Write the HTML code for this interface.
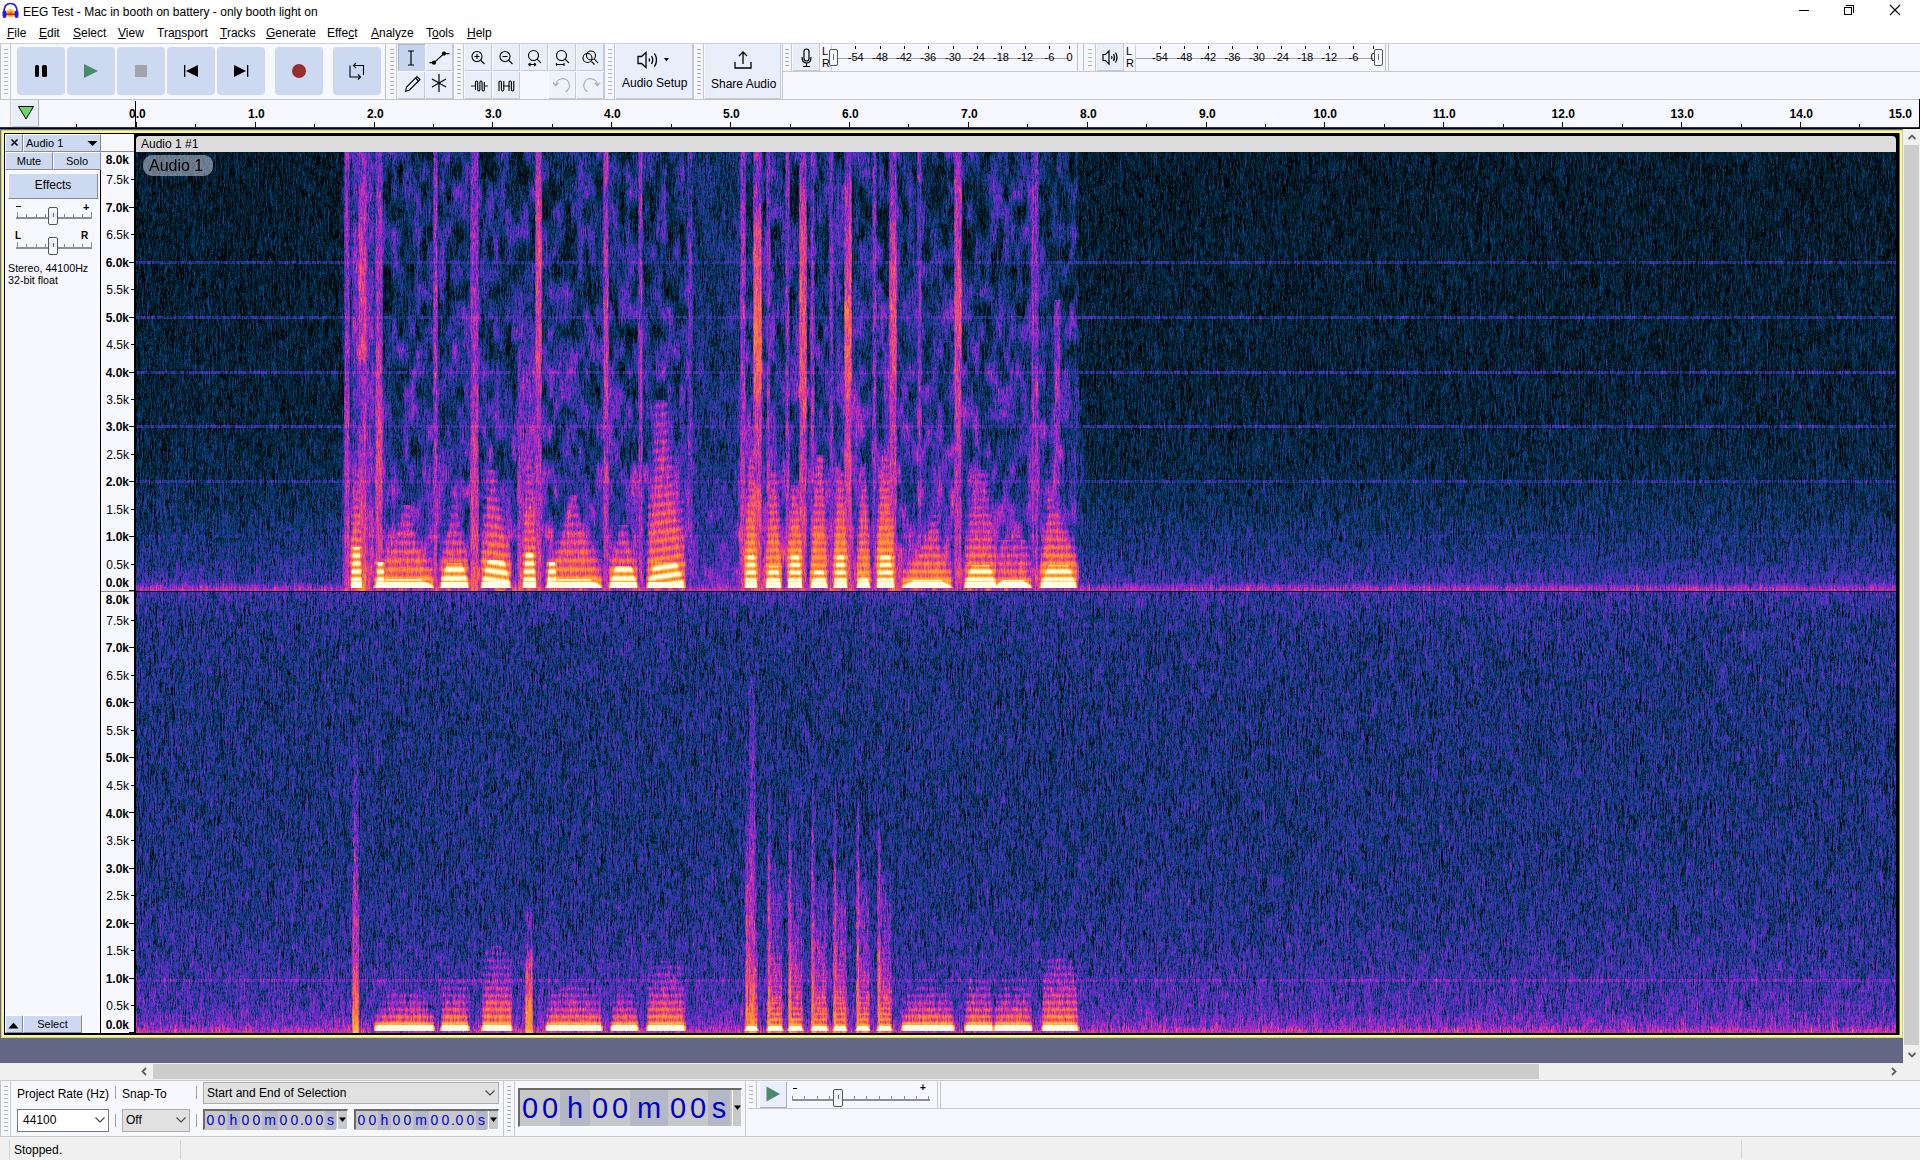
<!DOCTYPE html>
<html><head><meta charset="utf-8">
<style>
*{margin:0;padding:0;box-sizing:border-box}
html,body{width:1920px;height:1160px;overflow:hidden;background:#fff;font-family:"Liberation Sans",sans-serif;color:#000}
.a{position:absolute}
.t{position:absolute;white-space:nowrap;font-size:12px;line-height:14px}
.grab{position:absolute;background:repeating-linear-gradient(to bottom,#b4b4b4 0,#b4b4b4 1px,transparent 1px,transparent 4px)}
.sep{position:absolute;width:1px;background:#c8c8c8}
.tbtn{position:absolute;width:48px;height:48px;background:#cdd9f0;border-radius:4px}
.tool{position:absolute;width:27px;height:27px;background:#e9effa;border-right:1px solid #c5cad6;border-bottom:1px solid #c5cad6}
.u{text-decoration:underline}
</style></head><body>
<div class="a" style="left:0;top:0;width:1920px;height:43px;background:#fff"></div>
<svg class="a" style="left:1px;top:2px" width="19" height="17" viewBox="0 0 19 17">
  <defs><radialGradient id="lg" cx="50%" cy="55%" r="55%"><stop offset="0" stop-color="#ff3000"/><stop offset="0.45" stop-color="#ffa800"/><stop offset="1" stop-color="#ffe8a0"/></radialGradient></defs>
  <path d="M3 10 C3 4 5.5 1.5 9.5 1.5 C13.5 1.5 16 4 16 10" fill="none" stroke="#1c1cf0" stroke-width="1.7"/>
  <ellipse cx="9.5" cy="11" rx="5" ry="4.5" fill="url(#lg)"/>
  <rect x="5" y="11.6" width="9" height="1.4" fill="#ff1000"/>
  <rect x="1.5" y="8.5" width="4" height="7.5" rx="2" fill="#1c1cf0"/>
  <rect x="13.5" y="8.5" width="4" height="7.5" rx="2" fill="#1c1cf0"/>
</svg>
<div class="t" id="ttl" style="left:23px;top:5px;font-size:12px">EEG Test - Mac in booth on battery - only booth light on</div>
<div class="a" style="left:1799px;top:10px;width:10px;height:1px;background:#000"></div>
<div class="a" style="left:1844px;top:7px;width:8px;height:8px;border:1px solid #000"></div>
<div class="a" style="left:1846px;top:5px;width:8px;height:8px;border-top:1px solid #000;border-right:1px solid #000"></div>
<svg class="a" style="left:1889px;top:4px" width="12" height="12"><path d="M1 1L11 11M11 1L1 11" stroke="#000" stroke-width="1.1"/></svg>
<div class="t" style="left:7px;top:26px"><span class="u">F</span>ile</div>
<div class="t" style="left:39px;top:26px"><span class="u">E</span>dit</div>
<div class="t" style="left:73px;top:26px"><span class="u">S</span>elect</div>
<div class="t" style="left:118px;top:26px"><span class="u">V</span>iew</div>
<div class="t" style="left:157px;top:26px">Tra<span class="u">n</span>sport</div>
<div class="t" style="left:220px;top:26px"><span class="u">T</span>racks</div>
<div class="t" style="left:266px;top:26px"><span class="u">G</span>enerate</div>
<div class="t" style="left:327px;top:26px">Effe<span class="u">c</span>t</div>
<div class="t" style="left:371px;top:26px"><span class="u">A</span>nalyze</div>
<div class="t" style="left:426px;top:26px">T<span class="u">o</span>ols</div>
<div class="t" style="left:467px;top:26px"><span class="u">H</span>elp</div>
<div class="a" style="left:0;top:43px;width:1920px;height:57px;background:#f7f8fd;border-top:1px solid #cfcfcf;border-bottom:1px solid #c4c4c4"></div>
<!-- transport -->
<div class="a" style="left:0;top:44px;width:1px;height:55px;background:#c4c4c4"></div>
<div class="grab" style="left:4px;top:49px;height:45px;width:4px"></div>
<div class="sep" style="left:10px;top:44px;height:55px"></div>
<div class="tbtn" style="left:17px;top:47px"></div>
<div class="tbtn" style="left:67px;top:47px"></div>
<div class="tbtn" style="left:117px;top:47px"></div>
<div class="tbtn" style="left:167px;top:47px"></div>
<div class="tbtn" style="left:217px;top:47px"></div>
<div class="tbtn" style="left:275px;top:47px"></div>
<div class="tbtn" style="left:333px;top:47px"></div>
<svg class="a" style="left:0;top:44px" width="400" height="55">
  <rect x="35" y="21" width="4" height="12" rx="1.6" fill="#000"/>
  <rect x="42" y="21" width="5" height="12" rx="1.6" fill="#000"/>
  <path d="M84 20 L98 27 L84 34 Z" fill="#4a8a6a"/>
  <rect x="135" y="21" width="12" height="12" fill="#a0a4ac"/>
  <rect x="184" y="21" width="1.3" height="12" fill="#000"/>
  <path d="M186 27 L198 21 L198 33 Z" fill="#000"/>
  <path d="M234 21 L246 27 L234 33 Z" fill="#000"/>
  <rect x="247" y="21" width="1.3" height="12" fill="#000"/>
  <circle cx="299" cy="27" r="7" fill="#962e2e"/>
  <path d="M350 21.5 L350 33 L360.5 33 M358 30.5 L360.5 33 L358 35.5 M353.5 21.5 L363.5 21.5 L363.5 31 M356 19 L353.5 21.5 L356 24" fill="none" stroke="#000" stroke-width="1.1"/>
</svg>
<div class="sep" style="left:385px;top:44px;height:55px"></div>
<!-- tools -->
<div class="grab" style="left:390px;top:49px;height:45px;width:4px"></div>
<div class="sep" style="left:396px;top:44px;height:55px"></div>
<div class="tool" style="left:398px;top:44px;background:#c6d4ef;border:none;border-left:1px solid #aab4c8;border-top:1px solid #aab4c8"></div>
<div class="tool" style="left:426px;top:44px"></div>
<div class="tool" style="left:398px;top:72px"></div>
<div class="tool" style="left:426px;top:72px"></div>
<svg class="a" style="left:396px;top:44px" width="60" height="55">
  <path d="M12 7 L18 7 M15 7 L15 21 M12 21 L18 21" stroke="#000" stroke-width="1.2" fill="none"/>
  <path d="M33.5 18.7 L38 18.7 L48 9.6 L53.5 9.6" stroke="#000" stroke-width="1.2" fill="none"/>
  <circle cx="38" cy="18.7" r="2.1" fill="#000"/><circle cx="48" cy="9.6" r="2.1" fill="#000"/>
  <path d="M9.5 47.5 L10.5 43 L21 32.5 L24 35.5 L13.5 46 Z M19.5 34 L22.5 37" stroke="#000" stroke-width="1.1" fill="none"/>
  <path d="M43 30 L43 48 M36 35 L50 43 M36 43 L50 35" stroke="#000" stroke-width="1.2"/>
</svg>
<div class="sep" style="left:453px;top:44px;height:55px"></div>
<!-- edit -->
<div class="grab" style="left:457px;top:49px;height:45px;width:4px"></div>
<div class="sep" style="left:463px;top:44px;height:55px"></div>
<div class="tool" style="left:465px;top:44px"></div>
<div class="tool" style="left:493px;top:44px"></div>
<div class="tool" style="left:521px;top:44px"></div>
<div class="tool" style="left:549px;top:44px"></div>
<div class="tool" style="left:577px;top:44px"></div>
<div class="tool" style="left:465px;top:72px"></div>
<div class="tool" style="left:493px;top:72px"></div>
<div class="tool" style="left:549px;top:72px;background:#eef2fb"></div>
<div class="tool" style="left:577px;top:72px;background:#eef2fb"></div>
<svg class="a" style="left:463px;top:44px" width="145" height="55" fill="none" stroke="#000" stroke-width="1.1">
  <circle cx="14" cy="12.5" r="5"/><path d="M17.6 16.1 L21.5 20 M11.5 12.5 L16.5 12.5 M14 10 L14 15"/>
  <circle cx="42" cy="12.5" r="5"/><path d="M45.6 16.1 L49.5 20 M39.5 12.5 L44.5 12.5"/>
  <circle cx="70.5" cy="11.5" r="5"/><path d="M74.1 15.1 L78 19 M65.5 20.5 L73 20.5 M65.5 20.5 L67.5 19 M65.5 20.5 L67.5 22 M73 20.5 L71 19 M73 20.5 L71 22"/>
  <circle cx="98.5" cy="11.5" r="5"/><path d="M102.1 15.1 L106 19 M93.5 20.5 L101 20.5 M93.5 19 L93.5 22 M101 19 L101 22"/>
  <circle cx="124.5" cy="14" r="4.5"/><circle cx="128" cy="11.5" r="4.5"/><path d="M131.3 15 L135 19 M128.5 17.5 L131.5 20.5"/>
  <path d="M8 42 L12 42 M21 42 L25 42" stroke="#666" stroke-width="1.6"/>
  <path d="M12.5 46 L12.5 38.5 Q12.5 37 13.6 37 Q14.7 37 14.7 38.5 L14.7 45.5 Q14.7 47 15.8 47 Q16.9 47 16.9 45.5 L16.9 38.5 Q16.9 37 18 37 Q19.1 37 19.1 38.5 L19.1 45.5 Q19.1 47 20.2 47 Q21.3 47 21.3 45.5 L21.3 38" stroke-width="1.1"/>
  <path d="M40 42 L47 42" stroke="#666" stroke-width="1.6"/>
  <path d="M36 47 L36 38.5 Q36 37 37.2 37 Q38.4 37 38.4 38.5 L38.4 45.5 Q38.4 47 39.6 47 Q40.8 47 40.8 45.5 L40.8 37 M46 47 L46 38.5 Q46 37 47.2 37 Q48.4 37 48.4 38.5 L48.4 45.5 Q48.4 47 49.6 47 Q50.8 47 50.8 45.5 L50.8 37" stroke-width="1.1"/>
  <path d="M102.6 47.6 A6.8 6.8 0 1 0 92.8 41.3 M90 38.6 L92.8 41.6 L95.6 38.6" stroke="#a8acb8" stroke-width="1.2"/>
  <path d="M124.6 47.6 A6.8 6.8 0 1 1 134.4 41.3 M131.6 38.6 L134.4 41.6 L137.2 38.6" stroke="#a8acb8" stroke-width="1.2"/>
</svg>
<div class="sep" style="left:604px;top:44px;height:55px"></div>
<!-- audio setup -->
<div class="grab" style="left:608px;top:49px;height:45px;width:4px"></div>
<div class="sep" style="left:614px;top:44px;height:55px"></div>
<div class="a" style="left:616px;top:44px;width:77px;height:55px;background:#e9effa;border-right:1px solid #c5cad6;border-bottom:1px solid #c5cad6"></div>
<svg class="a" style="left:616px;top:44px" width="77" height="30" fill="none" stroke="#000" stroke-width="1.3">
  <path d="M22 12.5 L25.5 12.5 L30 8.5 L30 23.5 L25.5 19.5 L22 19.5 Z"/>
  <path d="M33 14.5 Q34.2 16 33 17.5 M35.5 12 Q38 16 35.5 20 M38.5 9.5 Q42.5 16 38.5 22.5"/>
  <path d="M48 14 L53 14 L50.5 17.5 Z" fill="#000" stroke="none"/>
</svg>
<div class="t" style="left:622px;top:76px">Audio Setup</div>
<div class="sep" style="left:693px;top:44px;height:55px"></div>
<div class="grab" style="left:697px;top:49px;height:45px;width:4px"></div>
<div class="sep" style="left:703px;top:44px;height:55px"></div>
<div class="a" style="left:705px;top:44px;width:76px;height:55px;background:#e9effa;border-right:1px solid #c5cad6;border-bottom:1px solid #c5cad6"></div>
<svg class="a" style="left:705px;top:44px" width="76" height="30" fill="none" stroke="#000" stroke-width="1.3">
  <path d="M38 8 L38 20 M34 12 L38 8 L42 12 M30 18 L30 24 L46 24 L46 18"/>
</svg>
<div class="t" style="left:711px;top:77px">Share Audio</div>
<div class="sep" style="left:782px;top:44px;height:55px"></div>
<!-- rec meter -->
<div class="grab" style="left:785px;top:49px;height:17px;width:4px"></div>
<div class="sep" style="left:791px;top:44px;height:27px"></div>
<div class="a" style="left:793px;top:44px;width:27px;height:27px;background:#e9effa;border-right:1px solid #c5cad6;border-bottom:1px solid #c5cad6"></div>
<svg class="a" style="left:793px;top:44px" width="27" height="27" fill="none" stroke="#000" stroke-width="1.2">
  <rect x="11" y="5" width="5" height="12" rx="2.5"/><path d="M9 13 Q9 19 13.5 19 Q18 19 18 13 M13.5 19 L13.5 22 M10 22.5 L17 22.5"/>
</svg>
<div class="a" style="left:0;top:71px;width:1920px;height:1px;background:transparent"></div>
<div class="t" style="left:822px;top:45px;font-size:11px;line-height:12px;color:#000">L</div>
<div class="t" style="left:822px;top:57px;font-size:11px;line-height:12px;color:#000">R</div>
<div class="a" style="left:831px;top:58px;width:238px;height:1px;background:#a0a0a0"></div>
<div class="a" style="left:831px;top:45px;width:1px;height:26px;background:#d0d0d0"></div>
<div class="a" style="left:855.2px;top:46px;width:1px;height:3px;background:#000"></div>
<div class="t" style="left:835.7px;width:40px;text-align:center;top:51px;font-size:11px;line-height:12px;background:transparent">-54</div>
<div class="a" style="left:879.5px;top:46px;width:1px;height:3px;background:#000"></div>
<div class="t" style="left:860.0px;width:40px;text-align:center;top:51px;font-size:11px;line-height:12px;background:transparent">-48</div>
<div class="a" style="left:903.5px;top:46px;width:1px;height:3px;background:#000"></div>
<div class="t" style="left:884.0px;width:40px;text-align:center;top:51px;font-size:11px;line-height:12px;background:transparent">-42</div>
<div class="a" style="left:927.8px;top:46px;width:1px;height:3px;background:#000"></div>
<div class="t" style="left:908.3px;width:40px;text-align:center;top:51px;font-size:11px;line-height:12px;background:transparent">-36</div>
<div class="a" style="left:952.5px;top:46px;width:1px;height:3px;background:#000"></div>
<div class="t" style="left:933.0px;width:40px;text-align:center;top:51px;font-size:11px;line-height:12px;background:transparent">-30</div>
<div class="a" style="left:976.5px;top:46px;width:1px;height:3px;background:#000"></div>
<div class="t" style="left:957.0px;width:40px;text-align:center;top:51px;font-size:11px;line-height:12px;background:transparent">-24</div>
<div class="a" style="left:1000.5px;top:46px;width:1px;height:3px;background:#000"></div>
<div class="t" style="left:981.0px;width:40px;text-align:center;top:51px;font-size:11px;line-height:12px;background:transparent">-18</div>
<div class="a" style="left:1024.8px;top:46px;width:1px;height:3px;background:#000"></div>
<div class="t" style="left:1005.3px;width:40px;text-align:center;top:51px;font-size:11px;line-height:12px;background:transparent">-12</div>
<div class="a" style="left:1049.0px;top:46px;width:1px;height:3px;background:#000"></div>
<div class="t" style="left:1029.5px;width:40px;text-align:center;top:51px;font-size:11px;line-height:12px;background:transparent">-6</div>
<div class="a" style="left:1069.0px;top:46px;width:1px;height:3px;background:#000"></div>
<div class="t" style="left:1049.5px;width:40px;text-align:center;top:51px;font-size:11px;line-height:12px;background:transparent">0</div>
<div class="a" style="left:829px;top:49px;width:9px;height:17px;border:1px solid #555;border-radius:2px;background:#f8f8f8"></div>
<div class="a" style="left:833px;top:54px;width:1px;height:6px;background:#777"></div>
<div class="sep" style="left:1077px;top:44px;height:27px;background:#c0c0c0"></div>
<div class="sep" style="left:1083px;top:44px;height:27px;background:#c0c0c0"></div>
<div class="grab" style="left:1088px;top:49px;height:17px;width:4px"></div>
<div class="sep" style="left:1095px;top:44px;height:27px"></div>
<div class="a" style="left:1097px;top:44px;width:27px;height:27px;background:#e9effa;border-right:1px solid #c5cad6;border-bottom:1px solid #c5cad6"></div>
<svg class="a" style="left:1097px;top:44px" width="27" height="27" fill="none" stroke="#000" stroke-width="1.2"><path d="M6 10.5 L8.5 10.5 L12 7 L12 20 L8.5 16.5 L6 16.5 Z M14.5 12 Q15.5 13.5 14.5 15 M16.5 10 Q18.5 13.5 16.5 17 M18.5 8.5 Q21.5 13.5 18.5 18.5"/></svg>
<div class="t" style="left:1126px;top:45px;font-size:11px;line-height:12px">L</div>
<div class="t" style="left:1126px;top:57px;font-size:11px;line-height:12px">R</div>
<div class="a" style="left:1135px;top:58px;width:238px;height:1px;background:#a0a0a0"></div>
<div class="a" style="left:1135px;top:45px;width:1px;height:26px;background:#d0d0d0"></div>
<div class="a" style="left:1159.5px;top:46px;width:1px;height:3px;background:#000"></div>
<div class="t" style="left:1140.0px;width:40px;text-align:center;top:51px;font-size:11px;line-height:12px">-54</div>
<div class="a" style="left:1183.9px;top:46px;width:1px;height:3px;background:#000"></div>
<div class="t" style="left:1164.4px;width:40px;text-align:center;top:51px;font-size:11px;line-height:12px">-48</div>
<div class="a" style="left:1207.8px;top:46px;width:1px;height:3px;background:#000"></div>
<div class="t" style="left:1188.3px;width:40px;text-align:center;top:51px;font-size:11px;line-height:12px">-42</div>
<div class="a" style="left:1232.0px;top:46px;width:1px;height:3px;background:#000"></div>
<div class="t" style="left:1212.5px;width:40px;text-align:center;top:51px;font-size:11px;line-height:12px">-36</div>
<div class="a" style="left:1256.5px;top:46px;width:1px;height:3px;background:#000"></div>
<div class="t" style="left:1237.0px;width:40px;text-align:center;top:51px;font-size:11px;line-height:12px">-30</div>
<div class="a" style="left:1280.5px;top:46px;width:1px;height:3px;background:#000"></div>
<div class="t" style="left:1261.0px;width:40px;text-align:center;top:51px;font-size:11px;line-height:12px">-24</div>
<div class="a" style="left:1304.8px;top:46px;width:1px;height:3px;background:#000"></div>
<div class="t" style="left:1285.3px;width:40px;text-align:center;top:51px;font-size:11px;line-height:12px">-18</div>
<div class="a" style="left:1328.8px;top:46px;width:1px;height:3px;background:#000"></div>
<div class="t" style="left:1309.3px;width:40px;text-align:center;top:51px;font-size:11px;line-height:12px">-12</div>
<div class="a" style="left:1353.0px;top:46px;width:1px;height:3px;background:#000"></div>
<div class="t" style="left:1333.5px;width:40px;text-align:center;top:51px;font-size:11px;line-height:12px">-6</div>
<div class="a" style="left:1373.0px;top:46px;width:1px;height:3px;background:#000"></div>
<div class="t" style="left:1353.5px;width:40px;text-align:center;top:51px;font-size:11px;line-height:12px">0</div>
<div class="a" style="left:1374px;top:49px;width:9px;height:17px;border:1px solid #555;border-radius:2px;background:#f8f8f8"></div>
<div class="a" style="left:1378px;top:54px;width:1px;height:6px;background:#777"></div>
<div class="sep" style="left:1385px;top:44px;height:27px;background:#c0c0c0"></div>
<div class="sep" style="left:1388px;top:44px;height:27px;background:#c0c0c0"></div>
<div class="a" style="left:782px;top:71px;width:1138px;height:1px;background:#c8c8c8"></div>
<div class="a" style="left:1390px;top:44px;width:530px;height:27px;background:#f7f8fd"></div>
<div class="a" style="left:0;top:100px;width:1920px;height:27px;background:#f7f8fd"></div>
<div class="a" style="left:10px;top:99px;width:1px;height:28px;background:#c8c8c8"></div>
<div class="a" style="left:12px;top:100px;width:27px;height:27px;background:#e9effa;border-right:1px solid #aab0be;border-bottom:1px solid #c5cad6"></div>
<svg class="a" style="left:12px;top:100px" width="27" height="27"><path d="M6.5 6.5 L21.5 6.5 L14 19 Z" fill="#6fd66f" stroke="#000" stroke-width="1"/></svg>
<div class="a" style="left:0;top:127px;width:1920px;height:1px;background:#333"></div>
<div class="a" style="left:0;top:128px;width:1920px;height:1px;background:#000"></div>
<div class="a" style="left:136px;top:122px;width:1px;height:5px;background:#000"></div>
<div class="t" style="left:107.3px;width:60px;text-align:center;top:107px;font-size:12px;line-height:14px;font-weight:bold;color:#000">0.0</div>
<div class="a" style="left:195px;top:124px;width:1px;height:3px;background:#000"></div>
<div class="a" style="left:76px;top:124px;width:1px;height:3px;background:#000"></div>
<div class="a" style="left:255px;top:122px;width:1px;height:5px;background:#000"></div>
<div class="t" style="left:226.3px;width:60px;text-align:center;top:107px;font-size:12px;line-height:14px;font-weight:bold;color:#000">1.0</div>
<div class="a" style="left:314px;top:124px;width:1px;height:3px;background:#000"></div>
<div class="a" style="left:374px;top:122px;width:1px;height:5px;background:#000"></div>
<div class="t" style="left:345.3px;width:60px;text-align:center;top:107px;font-size:12px;line-height:14px;font-weight:bold;color:#000">2.0</div>
<div class="a" style="left:433px;top:124px;width:1px;height:3px;background:#000"></div>
<div class="a" style="left:492px;top:122px;width:1px;height:5px;background:#000"></div>
<div class="t" style="left:463.3px;width:60px;text-align:center;top:107px;font-size:12px;line-height:14px;font-weight:bold;color:#000">3.0</div>
<div class="a" style="left:552px;top:124px;width:1px;height:3px;background:#000"></div>
<div class="a" style="left:611px;top:122px;width:1px;height:5px;background:#000"></div>
<div class="t" style="left:582.3px;width:60px;text-align:center;top:107px;font-size:12px;line-height:14px;font-weight:bold;color:#000">4.0</div>
<div class="a" style="left:671px;top:124px;width:1px;height:3px;background:#000"></div>
<div class="a" style="left:730px;top:122px;width:1px;height:5px;background:#000"></div>
<div class="t" style="left:701.3px;width:60px;text-align:center;top:107px;font-size:12px;line-height:14px;font-weight:bold;color:#000">5.0</div>
<div class="a" style="left:790px;top:124px;width:1px;height:3px;background:#000"></div>
<div class="a" style="left:849px;top:122px;width:1px;height:5px;background:#000"></div>
<div class="t" style="left:820.3px;width:60px;text-align:center;top:107px;font-size:12px;line-height:14px;font-weight:bold;color:#000">6.0</div>
<div class="a" style="left:908px;top:124px;width:1px;height:3px;background:#000"></div>
<div class="a" style="left:968px;top:122px;width:1px;height:5px;background:#000"></div>
<div class="t" style="left:939.3px;width:60px;text-align:center;top:107px;font-size:12px;line-height:14px;font-weight:bold;color:#000">7.0</div>
<div class="a" style="left:1027px;top:124px;width:1px;height:3px;background:#000"></div>
<div class="a" style="left:1087px;top:122px;width:1px;height:5px;background:#000"></div>
<div class="t" style="left:1058.3px;width:60px;text-align:center;top:107px;font-size:12px;line-height:14px;font-weight:bold;color:#000">8.0</div>
<div class="a" style="left:1146px;top:124px;width:1px;height:3px;background:#000"></div>
<div class="a" style="left:1206px;top:122px;width:1px;height:5px;background:#000"></div>
<div class="t" style="left:1177.3px;width:60px;text-align:center;top:107px;font-size:12px;line-height:14px;font-weight:bold;color:#000">9.0</div>
<div class="a" style="left:1265px;top:124px;width:1px;height:3px;background:#000"></div>
<div class="a" style="left:1324px;top:122px;width:1px;height:5px;background:#000"></div>
<div class="t" style="left:1295.3px;width:60px;text-align:center;top:107px;font-size:12px;line-height:14px;font-weight:bold;color:#000">10.0</div>
<div class="a" style="left:1384px;top:124px;width:1px;height:3px;background:#000"></div>
<div class="a" style="left:1443px;top:122px;width:1px;height:5px;background:#000"></div>
<div class="t" style="left:1414.3px;width:60px;text-align:center;top:107px;font-size:12px;line-height:14px;font-weight:bold;color:#000">11.0</div>
<div class="a" style="left:1503px;top:124px;width:1px;height:3px;background:#000"></div>
<div class="a" style="left:1562px;top:122px;width:1px;height:5px;background:#000"></div>
<div class="t" style="left:1533.3px;width:60px;text-align:center;top:107px;font-size:12px;line-height:14px;font-weight:bold;color:#000">12.0</div>
<div class="a" style="left:1622px;top:124px;width:1px;height:3px;background:#000"></div>
<div class="a" style="left:1681px;top:122px;width:1px;height:5px;background:#000"></div>
<div class="t" style="left:1652.3px;width:60px;text-align:center;top:107px;font-size:12px;line-height:14px;font-weight:bold;color:#000">13.0</div>
<div class="a" style="left:1741px;top:124px;width:1px;height:3px;background:#000"></div>
<div class="a" style="left:1800px;top:122px;width:1px;height:5px;background:#000"></div>
<div class="t" style="left:1771.3px;width:60px;text-align:center;top:107px;font-size:12px;line-height:14px;font-weight:bold;color:#000">14.0</div>
<div class="a" style="left:1859px;top:124px;width:1px;height:3px;background:#000"></div>
<div class="a" style="left:1919px;top:122px;width:1px;height:5px;background:#000"></div>
<div class="t" style="left:1852px;width:60px;text-align:right;top:107px;font-size:12px;line-height:14px;font-weight:bold;color:#000">15.0</div>
<div class="a" style="left:135px;top:101px;width:1px;height:26px;background:#000"></div>
<div class="a" style="left:1919px;top:99px;width:1px;height:30px;background:#000"></div>
<div class="a" style="left:0;top:129px;width:1903px;height:934px;background:#636786"></div>
<div class="a" style="left:1px;top:130px;width:1902px;height:908px;border:1px solid #d2d08e"></div>
<div class="a" style="left:2px;top:131px;width:1900px;height:906px;border:2px solid #fcfa86"></div>
<div class="a" style="left:4px;top:133px;width:1895px;height:902px;background:#000"></div>
<div class="a" style="left:5px;top:134px;width:95px;height:899px;background:#f7f8fd"></div>
<div class="a" style="left:100px;top:134px;width:1px;height:899px;background:#000"></div>
<div class="a" style="left:101px;top:134px;width:33px;height:899px;background:#f7f8fd"></div>
<div class="a" style="left:101px;top:151px;width:33px;height:1px;background:#8a8a8a"></div>
<div class="a" style="left:101px;top:591px;width:33px;height:1px;background:#8a8a8a"></div>
<div class="a" style="left:5px;top:134px;width:18px;height:18px;background:#cdd9f0;border-top:1px solid #fff;border-left:1px solid #fff;border-right:1px solid #8a8a8a;border-bottom:1px solid #8a8a8a"></div>
<div class="a" style="left:23px;top:134px;width:78px;height:18px;background:#cdd9f0;border-top:1px solid #fff;border-left:1px solid #fff;border-right:1px solid #8a8a8a;border-bottom:1px solid #8a8a8a"></div>
<div class="a" style="left:5px;top:152px;width:48px;height:18px;background:#cdd9f0;border-top:1px solid #fff;border-left:1px solid #fff;border-right:1px solid #8a8a8a;border-bottom:1px solid #8a8a8a"></div>
<div class="a" style="left:53px;top:152px;width:48px;height:18px;background:#cdd9f0;border-top:1px solid #fff;border-left:1px solid #fff;border-right:1px solid #8a8a8a;border-bottom:1px solid #8a8a8a"></div>
<div class="a" style="left:5px;top:170px;width:95px;height:1px;background:#fff"></div>
<div class="a" style="left:8px;top:173px;width:90px;height:26px;background:#cdd9f0;border-top:1px solid #fff;border-left:1px solid #fff;border-right:1px solid #8a8a8a;border-bottom:1px solid #8a8a8a"></div>
<svg class="a" style="left:5px;top:134px" width="96" height="18"><path d="M6.5 5.5 L12.5 11.5 M12.5 5.5 L6.5 11.5" stroke="#000" stroke-width="1.6"/><path d="M82.5 7 L92.5 7 L87.5 12 Z" fill="#000"/></svg>
<div class="t" style="left:26px;top:136px;font-size:11px">Audio 1</div>
<div class="t" style="left:5px;width:48px;text-align:center;top:154px;font-size:11px">Mute</div>
<div class="t" style="left:53px;width:48px;text-align:center;top:154px;font-size:11px">Solo</div>
<div class="t" style="left:8px;width:90px;text-align:center;top:178px;font-size:12px">Effects</div>
<div class="a" style="left:16px;top:217px;width:76px;height:2px;background:#8e8e8e"></div>
<div class="a" style="left:17px;top:212px;width:1px;height:5px;background:#8e8e8e"></div>
<div class="a" style="left:26px;top:214px;width:1px;height:3px;background:#8e8e8e"></div>
<div class="a" style="left:35.5px;top:214px;width:1px;height:3px;background:#8e8e8e"></div>
<div class="a" style="left:44.5px;top:214px;width:1px;height:3px;background:#8e8e8e"></div>
<div class="a" style="left:53.5px;top:214px;width:1px;height:3px;background:#8e8e8e"></div>
<div class="a" style="left:63.5px;top:214px;width:1px;height:3px;background:#8e8e8e"></div>
<div class="a" style="left:72.5px;top:214px;width:1px;height:3px;background:#8e8e8e"></div>
<div class="a" style="left:81.5px;top:214px;width:1px;height:3px;background:#8e8e8e"></div>
<div class="a" style="left:91px;top:212px;width:1px;height:5px;background:#8e8e8e"></div>
<div class="a" style="left:48px;top:207px;width:10px;height:18px;border:1px solid #555;border-radius:2px;background:linear-gradient(#fff,#e4eaf6 40%,#fff)"></div>
<div class="a" style="left:52.5px;top:213px;width:1.5px;height:4px;background:#666"></div>
<div class="a" style="left:16px;top:247px;width:76px;height:2px;background:#8e8e8e"></div>
<div class="a" style="left:17px;top:242px;width:1px;height:5px;background:#8e8e8e"></div>
<div class="a" style="left:26px;top:244px;width:1px;height:3px;background:#8e8e8e"></div>
<div class="a" style="left:35.5px;top:244px;width:1px;height:3px;background:#8e8e8e"></div>
<div class="a" style="left:44.5px;top:244px;width:1px;height:3px;background:#8e8e8e"></div>
<div class="a" style="left:53.5px;top:244px;width:1px;height:3px;background:#8e8e8e"></div>
<div class="a" style="left:63.5px;top:244px;width:1px;height:3px;background:#8e8e8e"></div>
<div class="a" style="left:72.5px;top:244px;width:1px;height:3px;background:#8e8e8e"></div>
<div class="a" style="left:81.5px;top:244px;width:1px;height:3px;background:#8e8e8e"></div>
<div class="a" style="left:91px;top:242px;width:1px;height:5px;background:#8e8e8e"></div>
<div class="a" style="left:48px;top:237px;width:10px;height:18px;border:1px solid #555;border-radius:2px;background:linear-gradient(#fff,#e4eaf6 40%,#fff)"></div>
<div class="a" style="left:52.5px;top:243px;width:1.5px;height:4px;background:#666"></div>
<div class="a" style="left:16px;top:206px;width:5px;height:1px;background:#000"></div>
<div class="t" style="left:83px;top:200px;font-size:11px;font-weight:bold">+</div>
<div class="t" style="left:15px;top:230px;font-size:10px;font-weight:bold;line-height:11px">L</div>
<div class="t" style="left:81px;top:230px;font-size:10px;font-weight:bold;line-height:11px">R</div>
<div class="t" style="left:8px;top:261.5px;font-size:10.7px;line-height:12px">Stereo, 44100Hz</div>
<div class="t" style="left:8px;top:273.5px;font-size:10.7px;line-height:12px">32-bit float</div>
<div class="a" style="left:5px;top:1015px;width:18px;height:18px;background:#cdd9f0;border-top:1px solid #fff;border-left:1px solid #fff;border-right:1px solid #8a8a8a;border-bottom:1px solid #8a8a8a"></div>
<div class="a" style="left:23px;top:1015px;width:59px;height:18px;background:#cdd9f0;border-top:1px solid #fff;border-left:1px solid #fff;border-right:1px solid #8a8a8a;border-bottom:1px solid #8a8a8a"></div>
<svg class="a" style="left:5px;top:1015px" width="18" height="18"><path d="M3.5 13.5 L13.5 13.5 L8.5 7.5 Z" fill="#000"/></svg>
<div class="t" style="left:23px;width:59px;text-align:center;top:1017px;font-size:11px">Select</div>
<div class="t" style="left:60px;width:69px;text-align:right;top:152.5px;font-size:12px;line-height:14px;font-weight:bold">8.0k</div>
<div class="a" style="left:131px;top:179px;width:3px;height:1px;background:#000"></div>
<div class="t" style="left:60px;width:69px;text-align:right;top:173.4px;font-size:12px;line-height:14px;font-weight:normal">7.5k</div>
<div class="a" style="left:129px;top:207px;width:5px;height:1px;background:#000"></div>
<div class="t" style="left:60px;width:69px;text-align:right;top:200.9px;font-size:12px;line-height:14px;font-weight:bold">7.0k</div>
<div class="a" style="left:131px;top:234px;width:3px;height:1px;background:#000"></div>
<div class="t" style="left:60px;width:69px;text-align:right;top:228.3px;font-size:12px;line-height:14px;font-weight:normal">6.5k</div>
<div class="a" style="left:129px;top:262px;width:5px;height:1px;background:#000"></div>
<div class="t" style="left:60px;width:69px;text-align:right;top:255.8px;font-size:12px;line-height:14px;font-weight:bold">6.0k</div>
<div class="a" style="left:131px;top:289px;width:3px;height:1px;background:#000"></div>
<div class="t" style="left:60px;width:69px;text-align:right;top:283.2px;font-size:12px;line-height:14px;font-weight:normal">5.5k</div>
<div class="a" style="left:129px;top:317px;width:5px;height:1px;background:#000"></div>
<div class="t" style="left:60px;width:69px;text-align:right;top:310.6px;font-size:12px;line-height:14px;font-weight:bold">5.0k</div>
<div class="a" style="left:131px;top:344px;width:3px;height:1px;background:#000"></div>
<div class="t" style="left:60px;width:69px;text-align:right;top:338.1px;font-size:12px;line-height:14px;font-weight:normal">4.5k</div>
<div class="a" style="left:129px;top:372px;width:5px;height:1px;background:#000"></div>
<div class="t" style="left:60px;width:69px;text-align:right;top:365.5px;font-size:12px;line-height:14px;font-weight:bold">4.0k</div>
<div class="a" style="left:131px;top:399px;width:3px;height:1px;background:#000"></div>
<div class="t" style="left:60px;width:69px;text-align:right;top:392.9px;font-size:12px;line-height:14px;font-weight:normal">3.5k</div>
<div class="a" style="left:129px;top:426px;width:5px;height:1px;background:#000"></div>
<div class="t" style="left:60px;width:69px;text-align:right;top:420.4px;font-size:12px;line-height:14px;font-weight:bold">3.0k</div>
<div class="a" style="left:131px;top:454px;width:3px;height:1px;background:#000"></div>
<div class="t" style="left:60px;width:69px;text-align:right;top:447.8px;font-size:12px;line-height:14px;font-weight:normal">2.5k</div>
<div class="a" style="left:129px;top:481px;width:5px;height:1px;background:#000"></div>
<div class="t" style="left:60px;width:69px;text-align:right;top:475.2px;font-size:12px;line-height:14px;font-weight:bold">2.0k</div>
<div class="a" style="left:131px;top:509px;width:3px;height:1px;background:#000"></div>
<div class="t" style="left:60px;width:69px;text-align:right;top:502.7px;font-size:12px;line-height:14px;font-weight:normal">1.5k</div>
<div class="a" style="left:129px;top:536px;width:5px;height:1px;background:#000"></div>
<div class="t" style="left:60px;width:69px;text-align:right;top:530.1px;font-size:12px;line-height:14px;font-weight:bold">1.0k</div>
<div class="a" style="left:131px;top:564px;width:3px;height:1px;background:#000"></div>
<div class="t" style="left:60px;width:69px;text-align:right;top:557.6px;font-size:12px;line-height:14px;font-weight:normal">0.5k</div>
<div class="t" style="left:60px;width:69px;text-align:right;top:576.0px;font-size:12px;line-height:14px;font-weight:bold">0.0k</div>
<div class="t" style="left:60px;width:69px;text-align:right;top:592.5px;font-size:12px;line-height:14px;font-weight:bold">8.0k</div>
<div class="a" style="left:131px;top:620px;width:3px;height:1px;background:#000"></div>
<div class="t" style="left:60px;width:69px;text-align:right;top:613.6px;font-size:12px;line-height:14px;font-weight:normal">7.5k</div>
<div class="a" style="left:129px;top:647px;width:5px;height:1px;background:#000"></div>
<div class="t" style="left:60px;width:69px;text-align:right;top:641.1px;font-size:12px;line-height:14px;font-weight:bold">7.0k</div>
<div class="a" style="left:131px;top:675px;width:3px;height:1px;background:#000"></div>
<div class="t" style="left:60px;width:69px;text-align:right;top:668.7px;font-size:12px;line-height:14px;font-weight:normal">6.5k</div>
<div class="a" style="left:129px;top:702px;width:5px;height:1px;background:#000"></div>
<div class="t" style="left:60px;width:69px;text-align:right;top:696.2px;font-size:12px;line-height:14px;font-weight:bold">6.0k</div>
<div class="a" style="left:131px;top:730px;width:3px;height:1px;background:#000"></div>
<div class="t" style="left:60px;width:69px;text-align:right;top:723.8px;font-size:12px;line-height:14px;font-weight:normal">5.5k</div>
<div class="a" style="left:129px;top:757px;width:5px;height:1px;background:#000"></div>
<div class="t" style="left:60px;width:69px;text-align:right;top:751.4px;font-size:12px;line-height:14px;font-weight:bold">5.0k</div>
<div class="a" style="left:131px;top:785px;width:3px;height:1px;background:#000"></div>
<div class="t" style="left:60px;width:69px;text-align:right;top:778.9px;font-size:12px;line-height:14px;font-weight:normal">4.5k</div>
<div class="a" style="left:129px;top:812px;width:5px;height:1px;background:#000"></div>
<div class="t" style="left:60px;width:69px;text-align:right;top:806.5px;font-size:12px;line-height:14px;font-weight:bold">4.0k</div>
<div class="a" style="left:131px;top:840px;width:3px;height:1px;background:#000"></div>
<div class="t" style="left:60px;width:69px;text-align:right;top:834.1px;font-size:12px;line-height:14px;font-weight:normal">3.5k</div>
<div class="a" style="left:129px;top:868px;width:5px;height:1px;background:#000"></div>
<div class="t" style="left:60px;width:69px;text-align:right;top:861.6px;font-size:12px;line-height:14px;font-weight:bold">3.0k</div>
<div class="a" style="left:131px;top:895px;width:3px;height:1px;background:#000"></div>
<div class="t" style="left:60px;width:69px;text-align:right;top:889.2px;font-size:12px;line-height:14px;font-weight:normal">2.5k</div>
<div class="a" style="left:129px;top:923px;width:5px;height:1px;background:#000"></div>
<div class="t" style="left:60px;width:69px;text-align:right;top:916.8px;font-size:12px;line-height:14px;font-weight:bold">2.0k</div>
<div class="a" style="left:131px;top:950px;width:3px;height:1px;background:#000"></div>
<div class="t" style="left:60px;width:69px;text-align:right;top:944.3px;font-size:12px;line-height:14px;font-weight:normal">1.5k</div>
<div class="a" style="left:129px;top:978px;width:5px;height:1px;background:#000"></div>
<div class="t" style="left:60px;width:69px;text-align:right;top:971.9px;font-size:12px;line-height:14px;font-weight:bold">1.0k</div>
<div class="a" style="left:131px;top:1005px;width:3px;height:1px;background:#000"></div>
<div class="t" style="left:60px;width:69px;text-align:right;top:999.4px;font-size:12px;line-height:14px;font-weight:normal">0.5k</div>
<div class="t" style="left:60px;width:69px;text-align:right;top:1018.0px;font-size:12px;line-height:14px;font-weight:bold">0.0k</div>
<div class="a" style="left:129px;top:590px;width:5px;height:1px;background:#000"></div>
<div class="a" style="left:129px;top:1032px;width:5px;height:1px;background:#000"></div>
<div class="a" style="left:134px;top:134px;width:2px;height:899px;background:#000"></div>
<div class="a" style="left:135px;top:134px;width:1763px;height:18px;background:#000;border-radius:5px 5px 0 0"></div>
<div class="a" style="left:136px;top:135.5px;width:1760px;height:16.5px;background:#dcdcdc;border-radius:4px 4px 0 0"></div>
<div class="t" style="left:141px;top:137px;font-size:12px">Audio 1 #1</div>
<canvas id="spec" class="a" width="1760" height="881" style="left:136px;top:152px;width:1760px;height:881px;background:linear-gradient(#05182a 0%,#0a2040 30%,#1a2a70 49.5%,#000 49.8%,#000 50%,#2a2f80 50.3%,#1e2d6a 75%,#3a3090 100%)"></canvas>
<div class="a" style="left:136px;top:591px;width:1760px;height:1px;background:#000"></div>
<div class="a" style="left:143px;top:155px;width:70px;height:21px;border-radius:9px;background:rgba(170,180,195,0.62)"></div>
<div class="t" style="left:149px;top:156px;font-size:16px;line-height:19px;color:#000">Audio 1</div>
<div class="a" style="left:1896px;top:134px;width:3px;height:900px;background:#000"></div>
<div class="a" style="left:1903px;top:129px;width:17px;height:934px;background:#f0f0f0"></div>
<div class="a" style="left:1904px;top:145px;width:15px;height:900px;background:#cdcdcd"></div>
<svg class="a" style="left:1904px;top:129px" width="16" height="16"><path d="M4.5 10 L8 6.5 L11.5 10" stroke="#606060" stroke-width="1.8" fill="none"/></svg>
<svg class="a" style="left:1904px;top:1047px" width="16" height="16"><path d="M4.5 6 L8 9.5 L11.5 6" stroke="#606060" stroke-width="1.8" fill="none"/></svg>
<div class="a" style="left:0;top:1063px;width:1920px;height:17px;background:#f0f0f0"></div>
<div class="a" style="left:153px;top:1064px;width:1386px;height:15px;background:#cdcdcd"></div>
<svg class="a" style="left:136px;top:1063px" width="16" height="17"><path d="M10 5 L6.5 8.5 L10 12" stroke="#606060" stroke-width="1.8" fill="none"/></svg>
<svg class="a" style="left:1886px;top:1063px" width="16" height="17"><path d="M6 5 L9.5 8.5 L6 12" stroke="#606060" stroke-width="1.8" fill="none"/></svg>
<div class="a" style="left:0;top:1080px;width:1920px;height:57px;background:#f7f8fd;border-top:1px solid #c8c8c8;border-bottom:1px solid #c8c8c8"></div>
<div class="a" style="left:0;top:1081px;width:1px;height:55px;background:#c4c4c4"></div>
<div class="grab" style="left:4px;top:1086px;height:45px;width:4px"></div>
<div class="sep" style="left:10px;top:1081px;height:55px"></div>
<div class="t" style="left:17px;top:1087px;font-size:12px">Project Rate (Hz)</div>
<div class="sep" style="left:115px;top:1086px;height:13px;background:#a0a0a0"></div>
<div class="t" style="left:122px;top:1087px;font-size:12px">Snap-To</div>
<div class="sep" style="left:196px;top:1086px;height:13px;background:#a0a0a0"></div>
<div class="sep" style="left:115px;top:1114px;height:13px;background:#a0a0a0"></div>
<div class="sep" style="left:196px;top:1114px;height:13px;background:#a0a0a0"></div>
<div class="a" style="left:17px;top:1109px;width:92px;height:23px;background:#fff;border:1px solid #7a7a7a"></div>
<div class="t" style="left:23px;top:1113px;font-size:12px">44100</div>
<svg class="a" style="left:95px;top:1117px" width="10" height="6"><path d="M0.5 0.5 L5 5 L9.5 0.5" stroke="#444" stroke-width="1.1" fill="none"/></svg>
<div class="a" style="left:122px;top:1109px;width:68px;height:23px;background:#e1e1e1;border:1px solid #adadad"></div>
<div class="t" style="left:126px;top:1113px;font-size:12px">Off</div>
<svg class="a" style="left:176px;top:1117px" width="10" height="6"><path d="M0.5 0.5 L5 5 L9.5 0.5" stroke="#444" stroke-width="1.1" fill="none"/></svg>
<div class="a" style="left:203px;top:1082px;width:296px;height:22px;background:#e1e1e1;border:1px solid #adadad"></div>
<div class="t" style="left:207px;top:1086px;font-size:12px">Start and End of Selection</div>
<svg class="a" style="left:485px;top:1090px" width="10" height="6"><path d="M0.5 0.5 L5 5 L9.5 0.5" stroke="#444" stroke-width="1.1" fill="none"/></svg>
<div class="a" style="left:203px;top:1109px;width:145px;height:21px;background:#c8c8c8;border-top:2px solid #6a6a6a;border-left:2px solid #6a6a6a;border-right:1px solid #fff;border-bottom:1px solid #fff"></div>
<div class="a" style="left:205px;top:1111px;width:11px;height:19px;background:#c8c8c8"></div>
<div class="t" style="left:205px;width:11px;text-align:center;top:1112px;font-size:14px;line-height:16px;color:#0000c8">0</div>
<div class="a" style="left:216px;top:1111px;width:11px;height:19px;background:#c8c8c8"></div>
<div class="t" style="left:216px;width:11px;text-align:center;top:1112px;font-size:14px;line-height:16px;color:#0000c8">0</div>
<div class="a" style="left:227px;top:1111px;width:13px;height:19px;background:#b4b8c6"></div>
<div class="t" style="left:227px;width:13px;text-align:center;top:1112px;font-size:14px;line-height:16px;color:#0000c8">h</div>
<div class="a" style="left:240px;top:1111px;width:11px;height:19px;background:#c8c8c8"></div>
<div class="t" style="left:240px;width:11px;text-align:center;top:1112px;font-size:14px;line-height:16px;color:#0000c8">0</div>
<div class="a" style="left:251px;top:1111px;width:11px;height:19px;background:#c8c8c8"></div>
<div class="t" style="left:251px;width:11px;text-align:center;top:1112px;font-size:14px;line-height:16px;color:#0000c8">0</div>
<div class="a" style="left:262px;top:1111px;width:16px;height:19px;background:#b4b8c6"></div>
<div class="t" style="left:262px;width:16px;text-align:center;top:1112px;font-size:14px;line-height:16px;color:#0000c8">m</div>
<div class="a" style="left:278px;top:1111px;width:11px;height:19px;background:#c8c8c8"></div>
<div class="t" style="left:278px;width:11px;text-align:center;top:1112px;font-size:14px;line-height:16px;color:#0000c8">0</div>
<div class="a" style="left:289px;top:1111px;width:11px;height:19px;background:#c8c8c8"></div>
<div class="t" style="left:289px;width:11px;text-align:center;top:1112px;font-size:14px;line-height:16px;color:#0000c8">0</div>
<div class="a" style="left:300px;top:1111px;width:3px;height:19px;background:#c8c8c8"></div>
<div class="t" style="left:300px;width:3px;text-align:center;top:1112px;font-size:14px;line-height:16px;color:#0000c8">.</div>
<div class="a" style="left:303px;top:1111px;width:11px;height:19px;background:#c8c8c8"></div>
<div class="t" style="left:303px;width:11px;text-align:center;top:1112px;font-size:14px;line-height:16px;color:#0000c8">0</div>
<div class="a" style="left:314px;top:1111px;width:11px;height:19px;background:#c8c8c8"></div>
<div class="t" style="left:314px;width:11px;text-align:center;top:1112px;font-size:14px;line-height:16px;color:#0000c8">0</div>
<div class="a" style="left:325px;top:1111px;width:11px;height:19px;background:#b4b8c6"></div>
<div class="t" style="left:325px;width:11px;text-align:center;top:1112px;font-size:14px;line-height:16px;color:#0000c8">s</div>
<div class="a" style="left:337px;top:1111px;width:10px;height:18px;background:#c8c8c8;border-left:1px solid #fff"></div>
<svg class="a" style="left:338px;top:1117px" width="9" height="6"><path d="M1 0.5 L8 0.5 L4.5 5 Z" fill="#000"/></svg>
<div class="a" style="left:354px;top:1109px;width:145px;height:21px;background:#c8c8c8;border-top:2px solid #6a6a6a;border-left:2px solid #6a6a6a;border-right:1px solid #fff;border-bottom:1px solid #fff"></div>
<div class="a" style="left:356px;top:1111px;width:11px;height:19px;background:#c8c8c8"></div>
<div class="t" style="left:356px;width:11px;text-align:center;top:1112px;font-size:14px;line-height:16px;color:#0000c8">0</div>
<div class="a" style="left:367px;top:1111px;width:11px;height:19px;background:#c8c8c8"></div>
<div class="t" style="left:367px;width:11px;text-align:center;top:1112px;font-size:14px;line-height:16px;color:#0000c8">0</div>
<div class="a" style="left:378px;top:1111px;width:13px;height:19px;background:#b4b8c6"></div>
<div class="t" style="left:378px;width:13px;text-align:center;top:1112px;font-size:14px;line-height:16px;color:#0000c8">h</div>
<div class="a" style="left:391px;top:1111px;width:11px;height:19px;background:#c8c8c8"></div>
<div class="t" style="left:391px;width:11px;text-align:center;top:1112px;font-size:14px;line-height:16px;color:#0000c8">0</div>
<div class="a" style="left:402px;top:1111px;width:11px;height:19px;background:#c8c8c8"></div>
<div class="t" style="left:402px;width:11px;text-align:center;top:1112px;font-size:14px;line-height:16px;color:#0000c8">0</div>
<div class="a" style="left:413px;top:1111px;width:16px;height:19px;background:#b4b8c6"></div>
<div class="t" style="left:413px;width:16px;text-align:center;top:1112px;font-size:14px;line-height:16px;color:#0000c8">m</div>
<div class="a" style="left:429px;top:1111px;width:11px;height:19px;background:#c8c8c8"></div>
<div class="t" style="left:429px;width:11px;text-align:center;top:1112px;font-size:14px;line-height:16px;color:#0000c8">0</div>
<div class="a" style="left:440px;top:1111px;width:11px;height:19px;background:#c8c8c8"></div>
<div class="t" style="left:440px;width:11px;text-align:center;top:1112px;font-size:14px;line-height:16px;color:#0000c8">0</div>
<div class="a" style="left:451px;top:1111px;width:3px;height:19px;background:#c8c8c8"></div>
<div class="t" style="left:451px;width:3px;text-align:center;top:1112px;font-size:14px;line-height:16px;color:#0000c8">.</div>
<div class="a" style="left:454px;top:1111px;width:11px;height:19px;background:#c8c8c8"></div>
<div class="t" style="left:454px;width:11px;text-align:center;top:1112px;font-size:14px;line-height:16px;color:#0000c8">0</div>
<div class="a" style="left:465px;top:1111px;width:11px;height:19px;background:#c8c8c8"></div>
<div class="t" style="left:465px;width:11px;text-align:center;top:1112px;font-size:14px;line-height:16px;color:#0000c8">0</div>
<div class="a" style="left:476px;top:1111px;width:11px;height:19px;background:#b4b8c6"></div>
<div class="t" style="left:476px;width:11px;text-align:center;top:1112px;font-size:14px;line-height:16px;color:#0000c8">s</div>
<div class="a" style="left:488px;top:1111px;width:10px;height:18px;background:#c8c8c8;border-left:1px solid #fff"></div>
<svg class="a" style="left:489px;top:1117px" width="9" height="6"><path d="M1 0.5 L8 0.5 L4.5 5 Z" fill="#000"/></svg>
<div class="sep" style="left:503px;top:1081px;height:55px;background:#c8c8c8"></div>
<div class="grab" style="left:507px;top:1086px;height:45px;width:4px"></div>
<div class="sep" style="left:514px;top:1081px;height:55px"></div>
<div class="a" style="left:518px;top:1088px;width:224px;height:39px;background:#c8c8c8;border-top:2px solid #6a6a6a;border-left:2px solid #6a6a6a;border-right:1px solid #fff;border-bottom:1px solid #fff"></div>
<div class="a" style="left:520px;top:1090px;width:20px;height:36px;background:#c8c8c8"></div>
<div class="t" style="left:520px;width:20px;text-align:center;top:1091px;font-size:29px;line-height:34px;color:#0000c8">0</div>
<div class="a" style="left:540px;top:1090px;width:20px;height:36px;background:#c8c8c8"></div>
<div class="t" style="left:540px;width:20px;text-align:center;top:1091px;font-size:29px;line-height:34px;color:#0000c8">0</div>
<div class="a" style="left:560px;top:1090px;width:30px;height:36px;background:#b4b8c6"></div>
<div class="t" style="left:560px;width:30px;text-align:center;top:1091px;font-size:29px;line-height:34px;color:#0000c8">h</div>
<div class="a" style="left:590px;top:1090px;width:20px;height:36px;background:#c8c8c8"></div>
<div class="t" style="left:590px;width:20px;text-align:center;top:1091px;font-size:29px;line-height:34px;color:#0000c8">0</div>
<div class="a" style="left:610px;top:1090px;width:20px;height:36px;background:#c8c8c8"></div>
<div class="t" style="left:610px;width:20px;text-align:center;top:1091px;font-size:29px;line-height:34px;color:#0000c8">0</div>
<div class="a" style="left:630px;top:1090px;width:38px;height:36px;background:#b4b8c6"></div>
<div class="t" style="left:630px;width:38px;text-align:center;top:1091px;font-size:29px;line-height:34px;color:#0000c8">m</div>
<div class="a" style="left:668px;top:1090px;width:20px;height:36px;background:#c8c8c8"></div>
<div class="t" style="left:668px;width:20px;text-align:center;top:1091px;font-size:29px;line-height:34px;color:#0000c8">0</div>
<div class="a" style="left:688px;top:1090px;width:20px;height:36px;background:#c8c8c8"></div>
<div class="t" style="left:688px;width:20px;text-align:center;top:1091px;font-size:29px;line-height:34px;color:#0000c8">0</div>
<div class="a" style="left:708px;top:1090px;width:22px;height:36px;background:#b4b8c6"></div>
<div class="t" style="left:708px;width:22px;text-align:center;top:1091px;font-size:29px;line-height:34px;color:#0000c8">s</div>
<div class="a" style="left:732px;top:1090px;width:9px;height:36px;background:#c8c8c8;border-left:1px solid #fff"></div>
<svg class="a" style="left:733px;top:1105px" width="9" height="6"><path d="M1 0.5 L8 0.5 L4.5 5 Z" fill="#000"/></svg>
<div class="sep" style="left:745px;top:1081px;height:55px;background:#c8c8c8"></div>
<div class="grab" style="left:749px;top:1086px;height:17px;width:4px"></div>
<div class="sep" style="left:756px;top:1081px;height:27px"></div>
<div class="a" style="left:760px;top:1082px;width:27px;height:26px;background:#e9effa;border-right:1px solid #aab0be;border-bottom:1px solid #aab0be"></div>
<svg class="a" style="left:760px;top:1082px" width="27" height="26"><path d="M6.5 4.5 L20 12 L6.5 19.5 Z" fill="#4a8a6a"/></svg>
<div class="a" style="left:792px;top:1099px;width:138px;height:2px;background:#8e8e8e"></div>
<div class="a" style="left:792.0px;top:1096px;width:1px;height:3px;background:#8e8e8e"></div>
<div class="a" style="left:804.4px;top:1096px;width:1px;height:3px;background:#8e8e8e"></div>
<div class="a" style="left:816.8px;top:1096px;width:1px;height:3px;background:#8e8e8e"></div>
<div class="a" style="left:829.2px;top:1096px;width:1px;height:3px;background:#8e8e8e"></div>
<div class="a" style="left:841.6px;top:1096px;width:1px;height:3px;background:#8e8e8e"></div>
<div class="a" style="left:854.0px;top:1096px;width:1px;height:3px;background:#8e8e8e"></div>
<div class="a" style="left:866.4px;top:1096px;width:1px;height:3px;background:#8e8e8e"></div>
<div class="a" style="left:878.8px;top:1096px;width:1px;height:3px;background:#8e8e8e"></div>
<div class="a" style="left:891.2px;top:1096px;width:1px;height:3px;background:#8e8e8e"></div>
<div class="a" style="left:903.6px;top:1096px;width:1px;height:3px;background:#8e8e8e"></div>
<div class="a" style="left:916.0px;top:1096px;width:1px;height:3px;background:#8e8e8e"></div>
<div class="a" style="left:928.4px;top:1096px;width:1px;height:3px;background:#8e8e8e"></div>
<div class="a" style="left:793px;top:1088px;width:4px;height:1px;background:#000"></div>
<div class="t" style="left:920px;top:1081px;font-size:10px;font-weight:bold">+</div>
<div class="a" style="left:833px;top:1089px;width:10px;height:18px;border:1px solid #555;border-radius:2px;background:linear-gradient(#fff,#e4eaf6 40%,#fff)"></div>
<div class="a" style="left:837.5px;top:1095px;width:1.5px;height:4px;background:#666"></div>
<div class="sep" style="left:937px;top:1081px;height:27px;background:#c8c8c8"></div>
<div class="sep" style="left:940px;top:1081px;height:27px;background:#c8c8c8"></div>
<div class="a" style="left:748px;top:1108px;width:1172px;height:1px;background:#c8c8c8"></div>
<div class="a" style="left:0;top:1137px;width:1920px;height:23px;background:#f0f0f0"></div>
<div class="a" style="left:9px;top:1140px;width:1px;height:19px;background:#d4d4d4"></div>
<div class="a" style="left:180px;top:1140px;width:1px;height:19px;background:#d4d4d4"></div>
<div class="a" style="left:1741px;top:1140px;width:1px;height:19px;background:#d4d4d4"></div>
<div class="t" style="left:14px;top:1143px;font-size:12px">Stopped.</div>
<script>
(function(){
var W=1760,H=881,X0=136,Y0=152;
var cv=document.getElementById('spec');
var ctx=cv.getContext('2d');
var img=ctx.createImageData(W,H);
var d=img.data;
var seed=987654321;
function rnd(){seed^=seed<<13;seed^=seed>>>17;seed^=seed<<5;return (seed>>>0)/4294967296;}
var stops=[[0,2,2,2],[0.08,0,20,28],[0.16,0,40,62],[0.26,12,60,120],[0.36,60,52,175],[0.46,120,42,205],[0.56,185,45,185],[0.66,235,70,120],[0.76,255,125,55],[0.86,255,185,60],[0.94,250,235,150],[1,255,255,235]];
var LUT=new Uint8Array(1024*3);
for(var i=0;i<1024;i++){var t=i/1023,k=0;while(k<stops.length-2&&t>stops[k+1][0])k++;var a=stops[k],b=stops[k+1],u=(t-a[0])/(b[0]-a[0]);if(u<0)u=0;if(u>1)u=1;
 LUT[i*3]=a[1]+(b[1]-a[1])*u;LUT[i*3+1]=a[2]+(b[2]-a[2])*u;LUT[i*3+2]=a[3]+(b[3]-a[3])*u;}
var F=new Float32Array(W*H);
// value noise grid for mottle
var GX=6,GY=20,gw=Math.ceil(W/GX)+2,gh=Math.ceil(H/GY)+2;
var G=new Float32Array(gw*gh); for(var i=0;i<G.length;i++)G[i]=rnd()*2-1;
function mot(x,y){ var fx=x/GX,fy=y/GY,ix=fx|0,iy=fy|0,ux=fx-ix,uy=fy-iy; ux=ux*ux*(3-2*ux); uy=uy*uy*(3-2*uy);
 var a=G[iy*gw+ix],b=G[iy*gw+ix+1],c=G[(iy+1)*gw+ix],e=G[(iy+1)*gw+ix+1];
 return (a*(1-ux)+b*ux)*(1-uy)+(c*(1-ux)+e*ux)*uy; }
function pl(pts,y){ if(y<=pts[0][0])return pts[0][1]; for(var i=1;i<pts.length;i++){ if(y<=pts[i][0]){var a=pts[i-1],b=pts[i];return a[1]+(b[1]-a[1])*(y-a[0])/(b[0]-a[0]);} } return pts[pts.length-1][1]; }
function put(x,y,t){ if(x<0||x>=W||y<0||y>=H)return; var i=y*W+x; if(t>F[i])F[i]=t; }
// wash with mottle
function wash(x0,x1,pts,ya,yb,amp){ amp=amp||0.12;
 for(var x=x0-3;x<=x1+3;x++){ var m=1; if(x<x0)m=1-(x0-x)/4; else if(x>x1)m=1-(x-x1)/4;
  for(var y=ya;y<=yb;y++){ var t=pl(pts,y)+amp*mot(x-X0,y-Y0); put(x-X0,y-Y0,t-(1-m)*0.2); } } }
// band: gaussian-ish cross-section
function band(x0,x1,pts,ya,yb,soft,amp){ soft=soft||2; amp=(amp===undefined)?0.05:amp;
 for(var x=Math.floor(x0-soft);x<=Math.ceil(x1+soft);x++){ var m=1; if(x<x0)m=1-(x0-x)/(soft+1); else if(x>x1)m=1-(x-x1)/(soft+1); if(m<=0)continue;
  for(var y=ya;y<=yb;y++){ var t=pl(pts,y)+amp*mot(x-X0+40,y-Y0); put(x-X0,y-Y0,t-(1-m)*0.22); } } }
// harmonic blob
function voiced(o){ var x0=o.x0,x1=o.x1,yb=o.yb,yw=o.yw,ax=(o.ax===undefined)?(o.x0+o.x1)/2:o.ax,ay=o.ay,per=o.per||8,tw=o.tw||0.97,thi=o.tor||0.8,tlo=(o.tlo===undefined)?0.56:o.tlo,lean=o.lean||0,tri=(o.tri===undefined)?1:o.tri,dome=o.dome||0,pw=o.pw||1.3,sa=(o.sa===undefined)?0.14:o.sa;
 var cx=(x0+x1)/2, hwf=(x1-x0)/2;
 for(var x=Math.floor(x0)-2;x<=Math.ceil(x1)+2;x++){ var m=1; if(x<x0)m=1-(x0-x)/3; else if(x>x1)m=1-(x-x1)/3; if(m<=0)continue;
  var ph=(x-x0)*lean; var dxn=Math.abs(x-cx)/Math.max(hwf,1); var ayx=ay+dome*dxn*dxn;
  for(var y=Math.floor(ay);y<=yb;y++){ var t=-1;
   var st=0.5+0.5*Math.cos(2*Math.PI*(yb-y+ph)/per);
   if(y>=yw){ var bt=(yb-y<6)?1:0; var frw=(y-yw)/Math.max(1,yb-yw); var we=Math.abs(x-cx)/Math.max(1,hwf*((o.tz===undefined?0.55:o.tz)+0.45*frw));
     t=(tw+0.03)-(o.wsa||0.22)*(1-bt)*Math.pow(1-st,1.5); if(we>1){ t=Math.max(thi-0.1*(1-st), t-0.25*(we-1)*3); } }
   else if(y>=ayx){ var fr=(y-ayx)/(yw-ayx+0.01); var base=tlo+(thi-tlo)*Math.pow(fr,pw);
     var hw=hwf*(1-tri*(1-Math.pow(fr,o.tp||1.7))*0.9); var c=ax+(cx-ax)*fr; var e=Math.abs(x-c)/Math.max(hw,1);
     t=base-sa*(1-st)-0.25*Math.max(0,e-0.8); }
   if(t>-1) put(x-X0,y-Y0,t-(1-m)*0.3); } } }
var UA=152,UB=590,LA=592,LB=1032;
function V(x0,x1,yb,yw,ax,ay,extra){ var o={x0:x0,x1:x1,yb:yb,yw:yw,ax:ax,ay:ay}; if(extra)for(var k in extra)o[k]=extra[k]; voiced(o); }
// ---------- UPPER CHANNEL -----------
wash(345,690,[[152,0.22],[300,0.26],[450,0.33],[540,0.43],[585,0.52],[590,0.56]],UA,UB,0.2);
wash(690,740,[[152,0.22],[450,0.27],[560,0.36],[590,0.45]],UA,UB,0.08);
wash(740,1075,[[152,0.22],[300,0.27],[450,0.35],[540,0.45],[585,0.53],[590,0.56]],UA,UB,0.2);
wash(1076,1082,[[152,0.16],[400,0.2],[500,0.26],[590,0.34]],400,UB,0.06);
band(345,348,[[152,0.5],[400,0.54],[590,0.62]],UA,UB,1);
band(353,372,[[152,0.36],[250,0.42],[300,0.48],[345,0.46],[420,0.42],[500,0.52],[540,0.6],[590,0.64]],UA,UB,2,0.1);
band(359,365,[[152,0.48],[265,0.64],[345,0.64],[400,0.52],[480,0.62],[530,0.7],[590,0.74]],UA,UB,1,0.08);
V(351,361,587,547,356,470,{per:8,tri:0.5,tlo:0.6,tor:0.8});
band(376,381,[[152,0.46],[400,0.6],[460,0.68],[520,0.62],[590,0.62]],UA,UB,1);
V(375,432,587,579,406,505,{per:9,tri:1,tlo:0.58,tor:0.84});
V(376,384,587,562,380,562,{per:8,tri:0});
band(434,436,[[152,0.52],[590,0.58]],UA,UB,1);
V(441,467,587,563,454,505,{per:9,tri:0.9,tlo:0.56,tor:0.76});
band(471,477,[[152,0.5],[350,0.52],[480,0.62],[560,0.68],[590,0.68]],UA,UB,1);
V(482,509,587,560,490,470,{per:9,tri:0.8,tlo:0.58,tor:0.8,lean:0.15});
band(511,515,[[152,0.1],[590,0.1]],UA,UB,0,0);
band(518,535,[[300,0.2],[380,0.42],[450,0.52],[590,0.64]],300,UB,1,0.08);
V(523,535,587,552,529,460,{per:8,tri:0.5,tlo:0.6,tor:0.78});
band(536,540,[[152,0.54],[250,0.64],[330,0.66],[420,0.54],[590,0.64]],UA,UB,1);
V(547,600,587,579,573,495,{per:9,tri:1,tlo:0.58,tor:0.84});
V(547,556,587,562,551,562,{per:8,tri:0});
band(604,607,[[152,0.52],[390,0.6],[430,0.56],[590,0.62]],UA,UB,1);
V(610,636,587,566,623,525,{per:9,tri:0.8,tlo:0.58,tor:0.78});
band(639,641,[[152,0.5],[590,0.56]],UA,UB,1);
V(648,683,587,562,660,400,{per:9,tri:0.8,tlo:0.56,tor:0.8,lean:-0.15});
band(688,691,[[152,0.4],[590,0.48]],UA,UB,1);
// segment D
band(741,744,[[152,0.5],[590,0.6]],UA,UB,1);
var obands=[[754,760,0.72],[800,805,0.7],[845,850,0.7],[890,895,0.68]];
for(var q=0;q<obands.length;q++){ var b0=obands[q][0],b1=obands[q][1],pk=obands[q][2]; band(b0,b1,[[152,0.48],[230,pk-0.1],[300,pk],[345,pk-0.02],[420,pk-0.1],[590,0.64]],UA,UB,1,0.06); }
var pbands=[767,786,811,830,873,918];
for(var q=0;q<pbands.length;q++){ band(pbands[q],pbands[q]+2,[[152,0.46],[400,0.5],[590,0.56]],UA,UB,1); }
var dseg=[[745,756,555],[766,780,566],[788,801,553],[811,826,570],[834,846,555],[857,869,575],[877,893,555]];
for(var q=0;q<dseg.length;q++){ var s0=dseg[q][0],s1=dseg[q][1]; V(s0,s1,587,dseg[q][2],(s0+s1)/2,455+(q%3)*15,{per:7.5,tri:0.6,tlo:0.6,tor:0.85,sa:0.1,pw:1.0}); }
V(903,950,587,580,935,515,{per:8,tri:1,tlo:0.6,tor:0.86});
band(955,960,[[152,0.5],[250,0.6],[300,0.66],[345,0.66],[420,0.58],[500,0.58],[590,0.62]],UA,UB,1);
V(965,995,587,565,980,470,{per:8,tri:0.7,tlo:0.56,tor:0.78});
V(995,1030,587,580,1012,540,{per:8,tri:0.3,tlo:0.6,tor:0.8});
band(1032,1033,[[152,0.5],[590,0.56]],UA,UB,1);
band(1035,1037,[[152,0.48],[590,0.54]],UA,UB,1);
V(1041,1075,587,565,1050,490,{per:8,tri:0.9,tlo:0.58,tor:0.82});
band(1055,1059,[[300,0.45],[400,0.52],[520,0.48]],300,520,1);
// ---------- LOWER CHANNEL -----------
function lband(x0,x1,ytop,t1,t2){ band(x0,x1,[[ytop,0.2],[ytop+80,t1],[960,t2],[1000,0.72],[1032,0.86]],ytop,LB,1,0.04); }
function LV(x0,x1,ytop,dome){ V(x0,x1,1030,1025,(x0+x1)/2,ytop,{per:7,tri:0,tor:0.88,tlo:0.48,pw:1.5,dome:dome||12,sa:0.15,tz:0.92}); }
lband(353,357,700,0.4,0.62);
LV(376,432,990,14);
LV(442,467,975,10);
LV(483,510,945,10);
lband(526,531,860,0.42,0.62);
LV(547,600,985,12);
LV(612,636,990,8);
LV(648,683,960,10);
lband(749,754,621,0.34,0.6);
var lseg=[[746,756],[768,781],[789,801],[812,826],[834,845],[857,868],[878,890]];
for(var q=0;q<lseg.length;q++){ var s0=lseg[q][0],s1=lseg[q][1]; band(s0,s0+1,[[780,0.3],[850,0.5],[960,0.66],[1032,0.82]],780,LB,1,0.03); band(s0+1,s1,[[840,0.2],[900,0.4],[960,0.48],[1000,0.6],[1032,0.74]],840,LB,1,0.04); V(s0,s1,1030,1026,(s0+s1)/2,900,{per:5.5,tri:0,tor:0.86,tlo:0.46,pw:2.2,dome:4,sa:0.16,tz:0.85}); }
LV(903,952,985,12);
LV(966,991,975,8);
LV(995,1030,985,8);
LV(1043,1076,955,10);
// ---------- COMPOSE -----------
var hums=[[262,0.29],[317,0.31],[372,0.33],[426,0.33],[481,0.31],[536,0.29]];
var col=new Float32Array(H), hl=new Uint8Array(H);
for(var y=0;y<H;y++){ var sy=y+Y0, b;
 if(sy<=UB){ b=pl([[152,0.13],[300,0.14],[420,0.16],[470,0.185],[520,0.24],[560,0.3],[582,0.36],[586,0.5],[590,0.58]],sy);
   for(var h=0;h<hums.length;h++){ var dy=Math.abs(sy-hums[h][0]); if(dy<1.6){ b=Math.max(b,hums[h][1]); hl[y]=h+1; } }
 } else if(sy==591){ b=-1; }
 else { b=pl([[592,0.35],[620,0.3],[700,0.28],[850,0.285],[920,0.31],[970,0.35],[1010,0.4],[1024,0.47],[1030,0.58],[1032,0.6]],sy);
   if(Math.abs(sy-980)<1.6) b=Math.max(b,0.45);
 }
 col[y]=b; }
var nv=new Float32Array(W), sp=new Int8Array(W);
for(var y=0;y<H;y++){
 var b=col[y];
 for(var x=0;x<W;x++){
  var i=y*W+x, p=i*4;
  if(b<0){ d[p]=0;d[p+1]=0;d[p+2]=0;d[p+3]=255; continue; }
  var g=(rnd()+rnd()+rnd()-1.5)*1.15;
  nv[x]=0.76*nv[x]+0.65*g;
  if(sp[x]>0)sp[x]--; else if(rnd()<0.03) sp[x]=1+((rnd()*3)|0);
  var f=F[i], t=b; if(hl[y]) t+=0.05*mot(x*3,y*0.2+hl[y]*7);
  if(f>0&&hl[y]&&f<0.6) f+=0.05;
  if(f>t){ t=f+0.04*Math.exp(-(f-b)*10); }
  var n=nv[x]*(y>439?0.16:0.14); if(n>0)n*=0.75; else n*=1.15;
  if(sp[x]>0) n-=0.12;
  var att=t>0.5?Math.max(0.12,1-(t-0.5)*2.2):1;
  t=t+n*att;
  if(t<0)t=0; if(t>1)t=1;
  var k=(t*1023)|0;
  d[p]=LUT[k*3]; d[p+1]=LUT[k*3+1]; d[p+2]=LUT[k*3+2]; d[p+3]=255;
 } }
ctx.putImageData(img,0,0);
})();

</script>
</body></html>
